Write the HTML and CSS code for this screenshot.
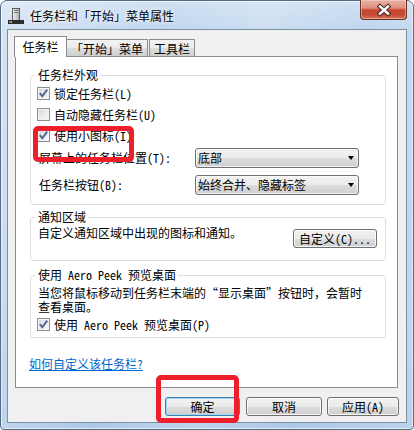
FILE: index.html
```html
<!DOCTYPE html>
<html lang="zh-CN">
<head>
<meta charset="utf-8">
<title>任务栏和「开始」菜单属性</title>
<link rel="stylesheet" href="styles.css">
</head>
<body>
<div class="window">
  <div class="titlebar">
    <svg class="app-icon" width="16" height="17" viewBox="0 0 16 17">
      <defs>
        <linearGradient id="tw" x1="0" y1="0" x2="1" y2="0">
          <stop offset="0" stop-color="#f4f4f4"/>
          <stop offset="1" stop-color="#a9a9a9"/>
        </linearGradient>
      </defs>
      <rect x="4.5" y="0.5" width="7" height="12" fill="url(#tw)" stroke="#5a5a5a"/>
      <rect x="6" y="2" width="4" height="1" fill="#777"/>
      <rect x="6" y="4" width="4" height="1" fill="#777"/>
      <rect x="0" y="12" width="16" height="4" fill="#2c2c2c"/>
      <rect x="1" y="13" width="1.5" height="1" fill="#e8442c"/>
      <rect x="2.5" y="13" width="1.5" height="1" fill="#7bbf3a"/>
      <rect x="1" y="14" width="1.5" height="1" fill="#2f8be0"/>
      <rect x="2.5" y="14" width="1.5" height="1" fill="#f4c21b"/>
    </svg>
    <span class="title">任务栏和「开始」菜单属性</span>
    <div class="close">
      <svg width="45" height="18" viewBox="0 0 45 18">
        <path d="M19 5.5 L27 12.5 M27 5.5 L19 12.5" stroke="#4a2b2b" stroke-width="4.6" stroke-linecap="square" fill="none"/>
        <path d="M19 5.5 L27 12.5 M27 5.5 L19 12.5" stroke="#ffffff" stroke-width="2.4" stroke-linecap="square" fill="none"/>
      </svg>
    </div>
  </div>

  <div class="client">
    <div class="tabs">
      <div class="tab active">任务栏</div>
      <div class="tab tab2">「开始」菜单</div>
      <div class="tab tab3">工具栏</div>
    </div>

    <div class="panel">
      <fieldset class="group g1">
        <legend>任务栏外观</legend>
        <div class="check-row">
          <span class="cb"><svg width="11" height="11" viewBox="0 0 11 11"><path d="M1.8 5.2 L4.3 8.2 L9.2 1.6" stroke="#4d6399" stroke-width="1.9" fill="none"/></svg></span>
          <span>锁定任务栏(L)</span>
        </div>
        <div class="check-row">
          <span class="cb"></span>
          <span>自动隐藏任务栏(U)</span>
        </div>
        <div class="check-row">
          <span class="cb"><svg width="11" height="11" viewBox="0 0 11 11"><path d="M1.8 5.2 L4.3 8.2 L9.2 1.6" stroke="#4d6399" stroke-width="1.9" fill="none"/></svg></span>
          <span>使用小图标(I)</span>
        </div>
        <div class="select-row first">
          <span class="label">屏幕上的任务栏位置(T):</span>
          <div class="select"><span>底部</span><span class="arrow"></span></div>
        </div>
        <div class="select-row second">
          <span class="label">任务栏按钮(B):</span>
          <div class="select"><span>始终合并、隐藏标签</span><span class="arrow"></span></div>
        </div>
      </fieldset>

      <fieldset class="group g2">
        <legend>通知区域</legend>
        <div class="notify-row">
          <span class="text">自定义通知区域中出现的图标和通知。</span>
          <button class="btn customize">自定义(C)...</button>
        </div>
      </fieldset>

      <fieldset class="group g3">
        <legend>使用 Aero Peek 预览桌面</legend>
        <p class="desc">当您将鼠标移动到任务栏末端的“显示桌面”按钮时，会暂时<br>查看桌面。</p>
        <div class="check-row">
          <span class="cb"><svg width="11" height="11" viewBox="0 0 11 11"><path d="M1.8 5.2 L4.3 8.2 L9.2 1.6" stroke="#4d6399" stroke-width="1.9" fill="none"/></svg></span>
          <span>使用 Aero Peek 预览桌面(P)</span>
        </div>
      </fieldset>

      <a class="help-link" href="#">如何自定义该任务栏?</a>
    </div>

    <div class="buttons">
      <button class="btn ok">确定</button>
      <button class="btn cancel">取消</button>
      <button class="btn apply">应用(A)</button>
    </div>
  </div>

  <div class="highlight hl-icons"></div>
  <div class="highlight hl-ok"></div>
</div>
</body>
</html>
```
FILE: styles.css
```css
* {
  box-sizing: border-box;
}

html,
body {
  margin: 0;
  padding: 0;
}

body {
  width: 414px;
  height: 430px;
  overflow: hidden;
  background: #ffffff;
  font-family: "Noto Sans Mono CJK SC", "Noto Sans CJK SC", sans-serif;
  font-size: 12px;
  line-height: 14px;
  color: #000000;
}

.window {
  position: relative;
  width: 414px;
  height: 430px;
  display: flex;
  flex-direction: column;
  padding: 0 6px 6px 6px;
  border: 1px solid #566b84;
  border-radius: 7px 7px 4px 4px;
  background:
    linear-gradient(100deg, rgba(255,255,255,0.35) 0%, rgba(255,255,255,0.15) 22%, rgba(255,255,255,0) 34%, rgba(255,255,255,0.2) 55%, rgba(255,255,255,0) 75%, rgba(255,255,255,0.18) 100%),
    linear-gradient(to bottom, #cfe0f3 0%, #c0d6ee 28px, #b9d1ec 60%, #adc9e8 100%);
  box-shadow: inset 0 0 0 1px rgba(255, 255, 255, 0.55);
}

/* ---------- title bar ---------- */
.titlebar {
  display: flex;
  align-items: flex-start;
  height: 28px;
  flex: 0 0 28px;
}

.app-icon {
  margin: 7px 6px 0 1px;
  flex: 0 0 auto;
}

.title {
  margin-top: 8px;
  font-size: 12px;
  line-height: 14px;
  color: #000;
  text-shadow: 0 0 5px rgba(255, 255, 255, 0.9), 0 0 2px rgba(255, 255, 255, 0.9);
}

.close {
  margin-left: auto;
  margin-top: -1px;
  width: 47px;
  height: 20px;
  border: 1px solid #6b3027;
  border-top: none;
  border-radius: 0 0 4px 4px;
  background: linear-gradient(to bottom, #eab2a3 0%, #de907d 42%, #c7472f 52%, #c44a33 78%, #d8775c 100%);
  box-shadow: inset 0 0 0 1px rgba(255, 220, 210, 0.45);
  display: flex;
  align-items: center;
  justify-content: center;
}

/* ---------- client area ---------- */
.client {
  flex: 1 1 auto;
  display: flex;
  flex-direction: column;
  padding: 6px 8px 6px 7px;
  background: #f0f0f0;
  border: 1px solid #7d8fa5;
}

.tabs {
  display: flex;
  align-items: flex-end;
  height: 20px;
  flex: 0 0 20px;
  margin-left: -1px;
}

.tab {
  height: 17px;
  border: 1px solid #898c95;
  border-bottom: none;
  background: linear-gradient(to bottom, #f3f3f3 0%, #ebebeb 50%, #dddddd 51%, #cfcfcf 100%);
  display: flex;
  align-items: center;
  justify-content: center;
  padding-top: 1px;
  white-space: nowrap;
}

.tab.active {
  position: relative;
  z-index: 2;
  width: 53px;
  height: 21px;
  margin-bottom: -1px;
  background: #ffffff;
  padding-top: 0;
}

.tab2 {
  width: 82px;
  margin-left: -1px;
}

.tab3 {
  width: 46px;
  margin-left: 1px;
}

.panel {
  height: 332px;
  flex: 0 0 332px;
  display: flex;
  flex-direction: column;
  background: #ffffff;
  border: 1px solid #898c95;
  padding: 0 11px 0 14px;
}

/* ---------- group boxes ---------- */
.group {
  margin: 0;
  min-width: 0;
  border: 1px solid #d5dfe5;
  border-radius: 3px;
  padding: 0 8px 9px 6px;
}

.group legend {
  margin-left: -2px;
  padding: 0 2px 0 3px;
  line-height: 14px;
  font-size: 12px;
}

.g1 {
  margin-top: 11px;
  padding-top: 1px;
}

.g2 {
  margin-top: 5px;
  padding-top: 2px;
  padding-bottom: 12px;
}

.g3 {
  margin-top: 7px;
  padding-top: 4px;
  padding-bottom: 2px;
}

.check-row {
  display: flex;
  align-items: center;
  height: 21px;
  white-space: nowrap;
}

.cb {
  width: 13px;
  height: 13px;
  flex: 0 0 13px;
  margin-right: 4px;
  border: 1px solid #8e8f8f;
  background: linear-gradient(135deg, #d3d6db 0%, #e9eaec 50%, #fbfbfb 100%);
  box-shadow: inset 0 0 0 1px #f4f4f4;
  display: flex;
  align-items: center;
  justify-content: center;
}

.select-row {
  display: flex;
  align-items: center;
  height: 20px;
}

.select-row.first {
  margin-top: 2px;
}

.select-row.second {
  margin-top: 7px;
}

.select-row .label {
  flex: 0 0 158px;
  padding-left: 2px;
  white-space: nowrap;
}

.select {
  width: 164px;
  height: 20px;
  display: flex;
  align-items: center;
  justify-content: space-between;
  padding: 0 4px 0 2px;
  border: 1px solid #707070;
  border-radius: 3px;
  background: linear-gradient(to bottom, #f2f2f2 0%, #ebebeb 50%, #dddddd 51%, #cfcfcf 100%);
  box-shadow: inset 0 0 0 1px rgba(255, 255, 255, 0.7);
  white-space: nowrap;
}

.arrow {
  width: 0;
  height: 0;
  border-left: 3.5px solid transparent;
  border-right: 3.5px solid transparent;
  border-top: 4px solid #000000;
}

.notify-row {
  display: flex;
  justify-content: space-between;
  align-items: flex-start;
}

.notify-row .text {
  padding-left: 1px;
  white-space: nowrap;
}

.desc {
  margin: 0;
  padding-left: 1px;
  line-height: 14px;
  white-space: nowrap;
}

/* ---------- buttons ---------- */
.btn {
  font-family: inherit;
  font-size: 12px;
  line-height: 14px;
  color: #000;
  height: 19px;
  padding: 0;
  border: 1px solid #707070;
  border-radius: 3px;
  background: linear-gradient(to bottom, #f2f2f2 0%, #ebebeb 50%, #dddddd 51%, #cfcfcf 100%);
  box-shadow: inset 0 0 0 1px rgba(255, 255, 255, 0.75);
  display: flex;
  align-items: center;
  justify-content: center;
  white-space: nowrap;
}

.customize {
  width: 84px;
  margin-top: 3px;
}

.help-link {
  margin-top: 19px;
  margin-left: -1px;
  align-self: flex-start;
  color: #0066cc;
  text-decoration: underline;
  line-height: 14px;
}

.buttons {
  display: flex;
  justify-content: flex-end;
  margin-top: 9px;
  margin-right: -1px;
  height: 19px;
}

.ok {
  width: 75px;
  border-color: #3c7fb1;
  box-shadow: inset 0 0 0 1px #9fd6f3;
}

.cancel {
  width: 76px;
  margin-left: 6px;
}

.apply {
  width: 72px;
  margin-left: 5px;
}

/* ---------- red annotation boxes ---------- */
.highlight {
  position: absolute;
  border: 5px solid #ec1f2b;
  border-radius: 5px;
  pointer-events: none;
  z-index: 5;
}

.hl-icons {
  left: 32px;
  top: 125px;
  width: 101px;
  height: 36px;
}

.hl-ok {
  left: 155px;
  top: 374px;
  width: 83px;
  height: 48px;
}
```
